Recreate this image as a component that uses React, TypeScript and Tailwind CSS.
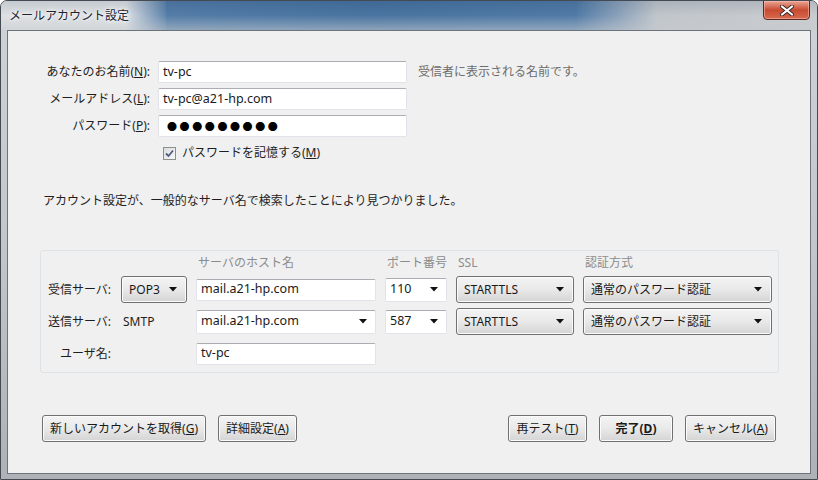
import React from "react";

const Arrow = () => (
    <svg width="8" height="5" viewBox="0 0 8 5" className="shrink-0">
        <path d="M0 0 H8 L4 4.5 Z" fill="#111" />
    </svg>
)

const Btn = ({ label, acc, rest, w, bold }: { label: string, acc: string, rest?: string, w: string, bold?: boolean }) => (
    <div className={`${w} h-[27px] flex items-center justify-center rounded-[3px] border border-[#707070] bg-gradient-to-b from-[#f4f4f4] via-[#e9e9e9] to-[#d4d4d4] shadow-[inset_0_0_0_1px_#fbfbfb] text-[12px] text-[#1a1a1a] ${bold ? "font-bold" : ""}`}>
        {label}(<span className="underline">{acc}</span>){rest}
    </div>
)

const Select = ({ text, w }: { text: string, w: string }) => (
    <div className={`${w} h-[27px] flex items-center justify-between pl-[7px] pr-[9px] rounded-[3px] border border-[#707070] bg-gradient-to-b from-[#f4f4f4] via-[#e9e9e9] to-[#d4d4d4] shadow-[inset_0_0_0_1px_#fbfbfb] text-[12px] text-[#1a1a1a]`}>
        <span>{text}</span>
        <Arrow />
    </div>
)

const Input = ({ text, w, arrow, h }: { text: string, w: string, arrow?: boolean, h?: string }) => (
    <div className={`${w} ${h ?? "h-[22px]"} flex items-center justify-between pl-[4px] pr-[8px] rounded-[2px] border border-[#e2e3ea] border-t-[#abadb3] bg-white text-[12.5px] text-[#1a1a1a]`}>
        <span>{text}</span>
        {arrow && <Arrow />}
    </div>
)

export default function App() {
    return (
        <div className="w-[818px] h-[480px] relative overflow-hidden rounded-t-[7px] border border-[#444a52] bg-gradient-to-b from-[#cfd3d7] via-[#c3c7cb] to-[#aeb2b6] font-['Noto_Sans','Noto_Sans_CJK_JP',sans-serif]">
            {/* glass title strip (blurred desktop behind) */}
            <div className="absolute left-0 top-0 w-full h-[29px] flex">
                <div className="w-[125px] bg-[#dcdfe2]" />
                <div className="w-[40px] bg-gradient-to-r from-[#dcdfe2] to-[#5a81aa]" />
                <div className="flex-1 bg-gradient-to-r from-[#4f79a5] via-[#44709e] to-[#4c77a4]" />
                <div className="w-[80px] bg-gradient-to-r from-[#4f79a5] to-[#bfc4c9]" />
                <div className="w-[160px] bg-gradient-to-r from-[#bfc4c9] to-[#c8cbce]" />
            </div>
            <div className="absolute left-0 top-0 w-full h-[29px] bg-gradient-to-b from-[rgba(30,50,80,0.12)] via-[rgba(255,255,255,0.03)] to-[rgba(200,204,208,0.55)]" />
            <div className="relative h-[29px] flex items-center pl-[8px] text-[12px] text-[#1b2433] [text-shadow:0_0_6px_#ffffff,0_0_3px_#ffffff]">
                メールアカウント設定
            </div>
            <div className="absolute top-[-1px] right-[7px] w-[47px] h-[20px] rounded-b-[4px] border border-[#5a2a22] bg-gradient-to-b from-[#e8a595] via-[#c84a30] to-[#d66a4f] flex items-center justify-center shadow-[inset_0_0_0_1px_rgba(255,200,190,0.5)]">
                <svg width="14" height="11" viewBox="0 0 14 11">
                    <path d="M2 1.5 L12 9.5 M12 1.5 L2 9.5" stroke="#3a2a28" strokeWidth="4" strokeLinecap="round" />
                    <path d="M2 1.5 L12 9.5 M12 1.5 L2 9.5" stroke="#ffffff" strokeWidth="2.2" strokeLinecap="round" />
                </svg>
            </div>

            {/* client area */}
            <div className="relative mx-[6px] h-[444px] border border-[#6c737b] bg-[#f0f0f0] text-[12px] text-[#1e1e1e] flex flex-col">
                <div className="pt-[30px] flex flex-col gap-[5px]">
                    <div className="flex items-center h-[22px]">
                        <div className="w-[142px] text-right">あなたのお名前(<span className="underline">N</span>):</div>
                        <div className="ml-[8px]"><Input text="tv-pc" w="w-[249px]" /></div>
                        <div className="ml-[11px] text-[#6d6d6d]">受信者に表示される名前です。</div>
                    </div>
                    <div className="flex items-center h-[22px]">
                        <div className="w-[142px] text-right">メールアドレス(<span className="underline">L</span>):</div>
                        <div className="ml-[8px]"><Input text="tv-pc@a21-hp.com" w="w-[249px]" /></div>
                    </div>
                    <div className="flex items-center h-[22px]">
                        <div className="w-[142px] text-right">パスワード(<span className="underline">P</span>):</div>
                        <div className="ml-[8px] w-[249px] h-[22px] flex items-center pl-[8px] rounded-[2px] border border-[#e2e3ea] border-t-[#abadb3] bg-white text-[10px] tracking-[2.6px] text-black font-['Noto_Sans_CJK_JP',sans-serif]">
                            ●●●●●●●●●
                        </div>
                    </div>
                </div>

                <div className="mt-[8px] h-[16px] flex items-center pl-[155px] gap-[6px]">
                    <div className="w-[13px] h-[13px] border border-[#8e8f8f] bg-gradient-to-br from-[#dcdcdc] to-[#f8f8f8] flex items-center justify-center">
                        <svg width="9" height="9" viewBox="0 0 9 9">
                            <path d="M1 4.5 L3.5 7 L8 1.5" stroke="#4d5d84" strokeWidth="1.8" fill="none" />
                        </svg>
                    </div>
                    <span>パスワードを記憶する(<span className="underline">M</span>)</span>
                </div>

                <div className="mt-[32px] h-[16px] flex items-center pl-[35px]">
                    アカウント設定が、一般的なサーバ名で検索したことにより見つかりました。
                </div>

                <div className="mt-[41px] ml-[32px] w-[739px] rounded-[3px] border border-[#dce2e6] pt-[4px] pb-[5px] flex flex-col gap-[5px]">
                    <div className="h-[16px] flex items-center text-[#8c8c8c]">
                        <div className="w-[157px]" />
                        <div className="w-[189px]">サーバのホスト名</div>
                        <div className="w-[71px]">ポート番号</div>
                        <div className="w-[127px]">SSL</div>
                        <div>認証方式</div>
                    </div>
                    <div className="h-[27px] flex items-center gap-[9px]">
                        <div className="w-[71px] text-right pr-[1px]">受信サーバ:</div>
                        <Select text="POP3" w="w-[66px]" />
                        <Input text="mail.a21-hp.com" w="w-[180px]" />
                        <Input text="110" w="w-[62px]" arrow h="h-[24px]" />
                        <Select text="STARTTLS" w="w-[118px]" />
                        <Select text="通常のパスワード認証" w="w-[189px]" />
                    </div>
                    <div className="h-[27px] flex items-center gap-[9px]">
                        <div className="w-[71px] text-right pr-[1px]">送信サーバ:</div>
                        <div className="w-[66px] pl-[2px]">SMTP</div>
                        <Input text="mail.a21-hp.com" w="w-[180px]" arrow h="h-[24px]" />
                        <Input text="587" w="w-[62px]" arrow h="h-[24px]" />
                        <Select text="STARTTLS" w="w-[118px]" />
                        <Select text="通常のパスワード認証" w="w-[189px]" />
                    </div>
                    <div className="h-[27px] flex items-center gap-[9px]">
                        <div className="w-[71px] text-right pr-[1px]">ユーザ名:</div>
                        <div className="w-[66px]" />
                        <Input text="tv-pc" w="w-[180px]" />
                    </div>
                </div>

                <div className="mt-[42px] flex items-center pl-[34px] pr-[34px]">
                    <div className="flex gap-[12px]">
                        <Btn label="新しいアカウントを取得" acc="G" w="w-[164px]" />
                        <Btn label="詳細設定" acc="A" w="w-[79px]" />
                    </div>
                    <div className="ml-auto flex gap-[12px]">
                        <Btn label="再テスト" acc="T" w="w-[79px]" />
                        <Btn label="完了" acc="D" w="w-[74px]" bold />
                        <Btn label="キャンセル" acc="A" w="w-[91px]" />
                    </div>
                </div>
            </div>
        </div>
    )
}
